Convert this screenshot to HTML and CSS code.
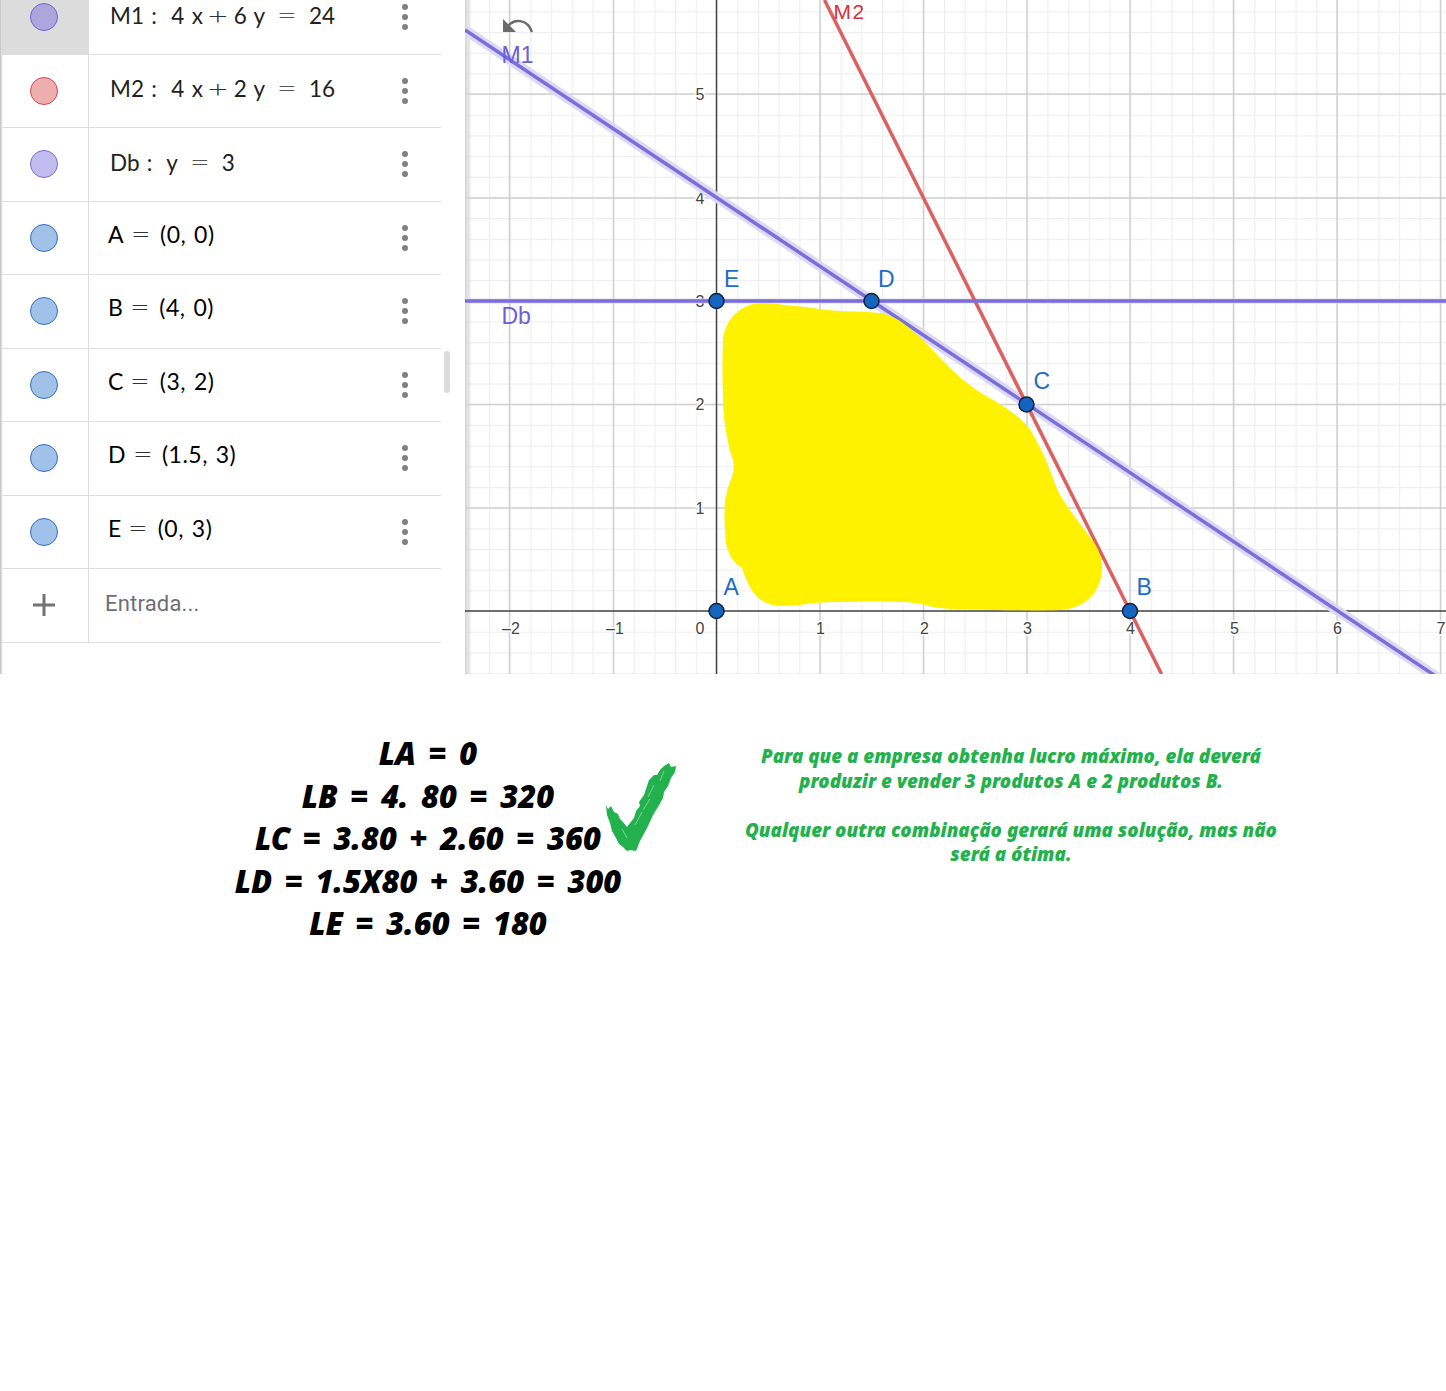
FILE: index.html
```html
<!DOCTYPE html>
<html lang="pt">
<head>
    <meta charset="UTF-8">
    <title>Problema de programação linear</title>
    <link rel="stylesheet" href="styles.css">
</head>
<body>

    <div class="app">
        <div class="algebra">
            <div class="rows">
                <div class="row selected">
                    <div class="marble-cell"><span class="marble purple-dark"></span></div>
                    <div class="formula line-formula">M1 :&nbsp; 4 x<span class="op">+</span>6 y <span class="op op-eq">=</span> 24</div>
                    <span class="more"></span>
                </div>
                <div class="row">
                    <div class="marble-cell"><span class="marble red"></span></div>
                    <div class="formula line-formula">M2 :&nbsp; 4 x<span class="op">+</span>2 y <span class="op op-eq">=</span> 16</div>
                    <span class="more"></span>
                </div>
                <div class="row">
                    <div class="marble-cell"><span class="marble purple"></span></div>
                    <div class="formula line-formula">Db :&nbsp; y <span class="op op-eq">=</span> 3</div>
                    <span class="more"></span>
                </div>
                <div class="row">
                    <div class="marble-cell"><span class="marble blue"></span></div>
                    <div class="formula">A<span class="op">=</span><span class="coords">(0, 0)</span></div>
                    <span class="more"></span>
                </div>
                <div class="row">
                    <div class="marble-cell"><span class="marble blue"></span></div>
                    <div class="formula">B<span class="op">=</span><span class="coords">(4, 0)</span></div>
                    <span class="more"></span>
                </div>
                <div class="row">
                    <div class="marble-cell"><span class="marble blue"></span></div>
                    <div class="formula">C<span class="op">=</span><span class="coords">(3, 2)</span></div>
                    <span class="more"></span>
                </div>
                <div class="row">
                    <div class="marble-cell"><span class="marble blue"></span></div>
                    <div class="formula">D<span class="op">=</span><span class="coords">(1.5, 3)</span></div>
                    <span class="more"></span>
                </div>
                <div class="row">
                    <div class="marble-cell"><span class="marble blue"></span></div>
                    <div class="formula">E<span class="op">=</span><span class="coords">(0, 3)</span></div>
                    <span class="more"></span>
                </div>
                <div class="row">
                    <div class="marble-cell">
                        <svg class="plus" width="22" height="22" viewBox="0 0 22 22"><path d="M0 11H22M11 0V22"/></svg>
                    </div>
                    <div class="entry">Entrada...</div>
                </div>
            </div>
            <span class="scrollbar"></span>
        </div>

        <svg class="graph" viewBox="465 0 981 674" width="981" height="674">
            <defs>
                <pattern id="minorX" patternUnits="userSpaceOnUse" x="716.5" y="0" width="20.68" height="674">
                    <rect x="0" y="0" width="1.2" height="674" fill="#eeeeee"/>
                </pattern>
                <pattern id="minorY" patternUnits="userSpaceOnUse" x="0" y="611" width="981" height="20.68">
                    <rect x="0" y="0" width="981" height="1.2" fill="#eeeeee"/>
                </pattern>
                <linearGradient id="edge">
                    <stop offset="0" stop-color="#d4d4d4"/>
                    <stop offset="1" stop-color="#d4d4d4" stop-opacity="0"/>
                </linearGradient>
            </defs>
            <rect x="465" y="0" width="981" height="674" fill="#fff"/>
            <rect x="465" y="0" width="981" height="674" fill="url(#minorX)"/>
            <rect x="465" y="0" width="981" height="674" fill="url(#minorY)"/>

            <path class="grid-major" d="M509.5 0V674M613.5 0V674M820 0V674M923.5 0V674M1027 0V674M1130 0V674M1233.5 0V674M1337 0V674M1440.5 0V674M465 94H1446M465 198H1446M465 301H1446M465 404.5H1446M465 508H1446"/>

            <rect x="465" y="0" width="7" height="674" fill="url(#edge)"/>

            <path class="axis" d="M716.5 0V674M465 611H1446"/>

            <g class="ticks">
                <text x="511" y="634">–2</text>
                <text x="615" y="634">–1</text>
                <text x="700" y="634">0</text>
                <text x="820.5" y="634">1</text>
                <text x="924.5" y="634">2</text>
                <text x="1027.5" y="634">3</text>
                <text x="1130.5" y="634">4</text>
                <text x="1234.5" y="634">5</text>
                <text x="1337.5" y="634">6</text>
                <text x="1441" y="634">7</text>
                <text x="700" y="514">1</text>
                <text x="700" y="410">2</text>
                <text x="700" y="307">3</text>
                <text x="700" y="204">4</text>
                <text x="700" y="100">5</text>
            </g>

            <path class="halo" d="M465 30L1446 683"/>
            <path class="halo-flat" d="M465 301H1446"/>
            <path class="line-red" d="M824.5 0L1161.5 674"/>
            <path class="line-purple" d="M465 30L1446 683"/>
            <path class="line-purple" d="M465 301H1446"/>

            <path class="blob" d="M785 305Q807 307 820 309Q833 311 856 311.5Q880 312 888 315Q897 318 908 327Q920 337 930 347Q940 358 950 368Q960 378 971 386Q983 395 995 401Q1007 408 1017 416Q1028 425 1034 436Q1040 447 1045 458Q1050 470 1054 481Q1058 493 1067 506Q1077 520 1087 533Q1101 549 1102 565Q1103 585 1090 598Q1078 609 1060 610Q1040 611 967 609.5Q945 609 933 607Q920 603 907 602Q870 601 840 602Q826 602 813 603Q798 606 783 606Q768 606 758 598Q748 588 742 568Q733 563 729 553Q725 545 725 530Q724 515 725 500Q727 488 732 477Q735 468 733 460Q729 449 727 437Q723 417 723 397Q722 368 723 340Q724 326 733 316Q745 303 763 303Q775 303 785 305Z"/>

            <path class="undo-head" d="M503 19V32H516Z"/>
            <path class="undo-arc" d="M508 26C514 19 527 18 532 32"/>

            <text class="label label-purple" x="501.5" y="63">M1</text>
            <text class="label label-purple" x="501.5" y="324">Db</text>
            <text class="label label-red" x="833.5" y="19.2">M2</text>
            <text class="label label-blue" x="724" y="286.5">E</text>
            <text class="label label-blue" x="878" y="286.5">D</text>
            <text class="label label-blue" x="1033.5" y="389">C</text>
            <text class="label label-blue" x="1136.5" y="595">B</text>
            <text class="label label-blue" x="723.5" y="595">A</text>

            <circle class="point" cx="716.5" cy="611" r="7.5"/>
            <circle class="point" cx="1130" cy="611" r="7.5"/>
            <circle class="point" cx="1026.5" cy="404.5" r="7.5"/>
            <circle class="point" cx="871.5" cy="301" r="7.5"/>
            <circle class="point" cx="716.5" cy="301" r="7.5"/>
        </svg>
    </div>

    <div class="notes">
        <div class="profits">
            <p>LA = 0</p>
            <p>LB = 4. 80 = 320</p>
            <p>LC = 3.80 + 2.60 = 360</p>
            <p>LD = 1.5X80 + 3.60 = 300</p>
            <p>LE = 3.60 = 180</p>
            <svg class="check" viewBox="605 762 73 92" width="73" height="92">
                <path class="check-fill" d="M606 805L608 809L611 806L614 812L618 814L620 819L623 822L627 827L630 823L634 818L636 811L640 806L639 802L644 795L647 786L649 780L654 775L657 775L660 770L664 766L669 763L671 767L676 766L675 772L671 778L668 786L664 792L663 798L658 807L653 815L649 824L645 832L640 841L636 851L630 850L627 851L623 847L619 844L616 838L612 831L610 823L607 815Z"/>
                <path class="check-scratch" d="M664 771L660 781M654 785L648 797M650 799L643 810M642 812L635 825M622 829L627 838"/>
            </svg>
        </div>
        <div class="conclusion">
            <p>Para que a empresa obtenha lucro máximo, ela deverá produzir e vender 3 produtos A e 2 produtos B.</p>
            <p>Qualquer outra combinação gerará uma solução, mas não será a ótima.</p>
        </div>
    </div>

</body>
</html>
```

FILE: styles.css
```css
html, body {
    margin: 0;
    padding: 0;
    background-color: #fff;
}

body {
    min-height: 1391px;
    font-family: "Lato", sans-serif;
}

.app {
    display: flex;
    height: 674px;
    overflow: hidden;
}

/* algebra view */
.algebra {
    position: relative;
    width: 465px;
    flex-shrink: 0;
    overflow: hidden;
    box-sizing: border-box;
    padding-left: 2px;
    background: linear-gradient(to right, #bdbdbd, #fff 3px);
}

.rows {
    width: 439px;
    margin-top: -19px;
}

.row {
    display: flex;
    align-items: center;
    height: 73.5px;
    box-sizing: border-box;
    border-bottom: 1px solid #ddd;
}

.row.selected .marble-cell {
    background-color: #dcdcdc;
}

.marble-cell {
    display: flex;
    align-items: center;
    justify-content: center;
    width: 87px;
    height: 100%;
    box-sizing: border-box;
    padding-right: 3px;
    border-right: 1px solid #ddd;
    flex-shrink: 0;
}

.marble {
    width: 28px;
    height: 28px;
    box-sizing: border-box;
    border-radius: 50%;
    border: 1px solid;
}

.purple-dark { background-color: #aca6dc; border-color: #6f65d8; }
.red { background-color: #edaeae; border-color: #d9434a; }
.purple { background-color: #c2bbee; border-color: #7a6edb; }
.blue { background-color: #a1c1e8; border-color: #2e6fc4; }

.formula {
    flex: 1;
    margin-left: 19px;
    margin-top: -8px;
    font-size: 23px;
    color: #000;
    white-space: nowrap;
}

.line-formula {
    margin-left: 21px;
    margin-top: -4px;
    font-size: 22.5px;
    word-spacing: 1.5px;
    color: #222;
}

.op {
    display: inline-block;
    margin: 0 9px 0 8px;
    font-size: 24px;
    font-weight: 300;
    line-height: 1;
    color: #333;
    transform: scaleX(1.45);
}

.op-eq {
    margin: 0 8px 0 8px;
    color: #555;
}

.coords {
    margin-left: 3.5px;
    letter-spacing: 0.5px;
    word-spacing: 1.5px;
}

.formula:not(.line-formula) .op {
    margin-left: 10px;
}

.more {
    width: 6px;
    height: 6px;
    margin-right: 33px;
    border-radius: 50%;
    background-color: #808080;
    box-shadow: 0 -10px 0 #808080, 0 10px 0 #808080;
}

.plus path {
    fill: none;
    stroke: #737373;
    stroke-width: 3;
}

.entry {
    margin-left: 16px;
    margin-top: -4px;
    font-family: "Roboto", sans-serif;
    font-size: 22px;
    letter-spacing: 0.2px;
    color: #6e6e74;
}

.scrollbar {
    position: absolute;
    left: 444px;
    top: 351px;
    width: 6px;
    height: 42px;
    border-radius: 3px;
    background-color: #dcdcdc;
}

/* graphics view */
.graph {
    display: block;
    flex-shrink: 0;
}

.grid-major {
    fill: none;
    stroke: #d0d0d0;
    stroke-width: 1.5;
}

.axis {
    fill: none;
    stroke: #444;
    stroke-width: 1.5;
}

.ticks text {
    font-family: "Liberation Sans", sans-serif;
    font-size: 16px;
    fill: #444;
    text-anchor: middle;
    stroke: #fff;
    stroke-width: 3px;
    paint-order: stroke;
}

.halo {
    fill: none;
    stroke: #dcd8f5;
    stroke-width: 10;
}

.halo-flat {
    fill: none;
    stroke: #dcd8f5;
    stroke-width: 5;
}

.line-purple {
    fill: none;
    stroke: #7a6ed8;
    stroke-width: 3.5;
}

.line-red {
    fill: none;
    stroke: #dc6060;
    stroke-width: 3.5;
}

.blob {
    fill: #fff200;
}

.undo-head {
    fill: #6b6b6b;
}

.undo-arc {
    fill: none;
    stroke: #6b6b6b;
    stroke-width: 2.5;
}

.label {
    font-family: "Liberation Sans", sans-serif;
    font-size: 23px;
}

.label-purple { fill: #6c5fd8; }
.label-red { fill: #d3323a; font-size: 21px; letter-spacing: 1.5px; }
.label-blue { fill: #1f6cc6; }

.point {
    fill: #1565c0;
    stroke: #14233c;
    stroke-width: 1.5;
}

/* text under the graph */
.notes {
    display: flex;
    padding-top: 58px;
}

.profits {
    position: relative;
    width: 456px;
    margin-left: 200px;
    font-family: "Noto Sans", sans-serif;
    font-size: 31px;
    font-weight: 900;
    font-style: italic;
    line-height: 42.5px;
    word-spacing: 4.5px;
    text-align: center;
    color: #000;
}

.profits p {
    margin: 0;
}

.check {
    position: absolute;
    left: 405px;
    top: 30px;
}

.check-fill {
    fill: #22b14c;
}

.check-scratch {
    fill: none;
    stroke: #7fd39a;
    stroke-width: 1;
}

.conclusion {
    width: 545px;
    margin-left: 82.5px;
    padding-top: 12px;
    font-family: "Noto Sans", sans-serif;
    font-size: 18.8px;
    font-weight: 900;
    font-style: italic;
    line-height: 24.6px;
    text-align: center;
    color: #22b14c;
}

.conclusion p {
    margin: 0 0 24.6px;
}
```
